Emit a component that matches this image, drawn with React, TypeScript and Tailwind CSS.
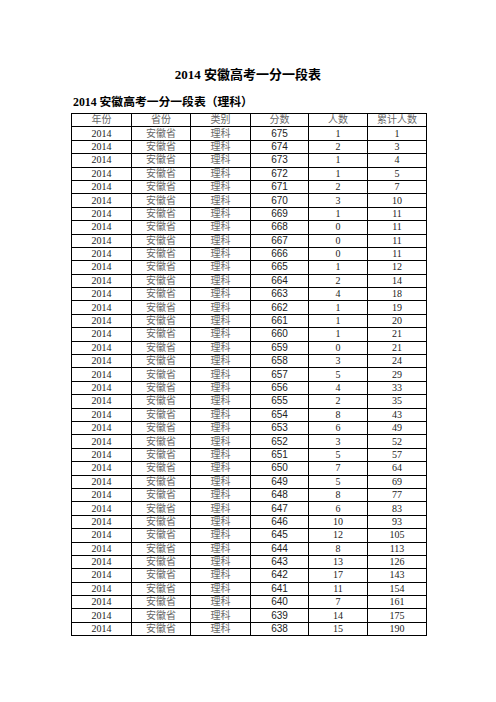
const rows: [number, number, number][] = [
  [675, 1, 1],
  [674, 2, 3],
  [673, 1, 4],
  [672, 1, 5],
  [671, 2, 7],
  [670, 3, 10],
  [669, 1, 11],
  [668, 0, 11],
  [667, 0, 11],
  [666, 0, 11],
  [665, 1, 12],
  [664, 2, 14],
  [663, 4, 18],
  [662, 1, 19],
  [661, 1, 20],
  [660, 1, 21],
  [659, 0, 21],
  [658, 3, 24],
  [657, 5, 29],
  [656, 4, 33],
  [655, 2, 35],
  [654, 8, 43],
  [653, 6, 49],
  [652, 3, 52],
  [651, 5, 57],
  [650, 7, 64],
  [649, 5, 69],
  [648, 8, 77],
  [647, 6, 83],
  [646, 10, 93],
  [645, 12, 105],
  [644, 8, 113],
  [643, 13, 126],
  [642, 17, 143],
  [641, 11, 154],
  [640, 7, 161],
  [639, 14, 175],
  [638, 15, 190],
];

const serif = "font-['Liberation_Serif','Noto_Sans_CJK_SC',serif]";
const cell = "border border-black p-0 text-center align-middle leading-none";

export default function App() {
  return (
    <div className={`w-[496px] h-[702px] bg-white ${serif} text-black`}>
      {/* 标题 */}
      <h1 className="pt-[67px] text-center text-[13px] font-bold leading-[16px]">
        2014 安徽高考一分一段表
      </h1>

      <div className="pl-[71px] pt-[11px]">
        <h2 className="ml-[2px] text-[11.8px] font-bold leading-[16px]">
          2014 安徽高考一分一段表（理科）
        </h2>

        {/* 一分一段表 */}
        <table className="mt-[3px] w-[355px] table-fixed border-collapse text-[10px]">
          <colgroup>
            <col className="w-[60px]" />
            <col className="w-[59px]" />
            <col className="w-[60px]" />
            <col className="w-[58px]" />
            <col className="w-[59px]" />
            <col className="w-[59px]" />
          </colgroup>
          <thead>
            <tr className="h-[13.4px] text-[#666]">
              <th className={`${cell} font-normal`}>年份</th>
              <th className={`${cell} font-normal`}>省份</th>
              <th className={`${cell} font-normal`}>类别</th>
              <th className={`${cell} font-normal`}>分数</th>
              <th className={`${cell} font-normal`}>人数</th>
              <th className={`${cell} font-normal`}>累计人数</th>
            </tr>
          </thead>
          <tbody>
            {rows.map(([score, count, total]) => (
              <tr key={score} className="h-[13.4px]">
                <td className={`${cell} text-[#222]`}>2014</td>
                <td className={`${cell} text-[#666]`}>安徽省</td>
                <td className={`${cell} text-[#666]`}>理科</td>
                <td className={`${cell} font-['Liberation_Sans',sans-serif] text-[#222]`}>{score}</td>
                <td className={`${cell} text-[#222]`}>{count}</td>
                <td className={`${cell} text-[#222]`}>{total}</td>
              </tr>
            ))}
          </tbody>
        </table>
      </div>
    </div>
  );
}
